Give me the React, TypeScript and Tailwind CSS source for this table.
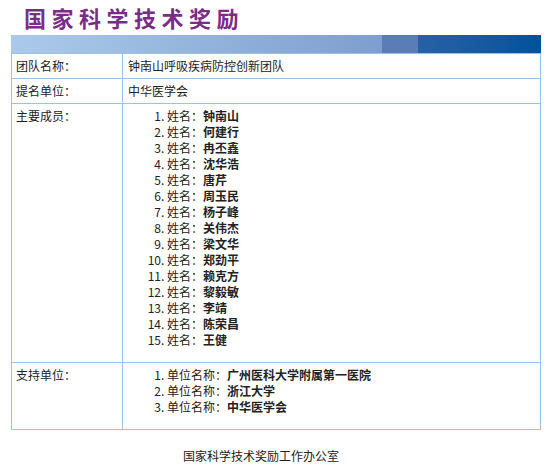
const members = [
  "钟南山",
  "何建行",
  "冉丕鑫",
  "沈华浩",
  "唐芹",
  "周玉民",
  "杨子峰",
  "关伟杰",
  "梁文华",
  "郑劲平",
  "赖克方",
  "黎毅敏",
  "李靖",
  "陈荣昌",
  "王健",
];

const units = ["广州医科大学附属第一医院", "浙江大学", "中华医学会"];

const cjk = "font-['Microsoft_YaHei','Noto_Sans_CJK_SC',sans-serif]";

export default function App() {
  return (
    <div className={`w-[552px] h-[476px] bg-white text-[12px] text-[#222] ${cjk}`}>
      {/* 标题 */}
      <div className="h-[35px] pl-[24px] pt-[3px]">
        <span className="text-[22px] leading-[28px] font-bold tracking-[5.5px] text-[#7b2c87]">国家科学技术奖励</span>
      </div>

      {/* 蓝色横条 */}
      <div className="ml-[11px] w-[530px] h-[18px] flex">
        <div className="w-[371px] bg-gradient-to-r from-[#abcaea] to-[#7e9ecf]" />
        <div className="w-[36px] bg-[#5a7db7]" />
        <div className="flex-1 bg-gradient-to-r from-[#2662a5] to-[#00529b]" />
      </div>

      <table className="ml-[11px] w-[530px] border-collapse border border-[#9dc0e6]">
        <tbody>
          <tr className="h-[25px]">
            <td className="w-[111px] border border-[#9dc0e6] pl-[4px] align-middle">团队名称：</td>
            <td className="border border-[#9dc0e6] pl-[5px] align-middle">钟南山呼吸疾病防控创新团队</td>
          </tr>
          <tr className="h-[25px]">
            <td className="border border-[#9dc0e6] pl-[4px] align-middle">提名单位：</td>
            <td className="border border-[#9dc0e6] pl-[5px] align-middle">中华医学会</td>
          </tr>
          <tr>
            <td className="border border-[#9dc0e6] pl-[4px] align-top pt-[3px]">主要成员：</td>
            <td className="border border-[#9dc0e6] align-top pl-[5px] pt-[4px] pb-[14px] h-[259px]">
              <ol className="list-decimal pl-[39px] leading-[16px]">
                {members.map((m) => (
                  <li key={m}>
                    姓名：<span className="font-bold">{m}</span>
                  </li>
                ))}
              </ol>
            </td>
          </tr>
          <tr>
            <td className="border border-[#9dc0e6] pl-[4px] align-top pt-[3px]">支持单位：</td>
            <td className="border border-[#9dc0e6] align-top pl-[5px] pt-[4px] h-[67px]">
              <ol className="list-decimal pl-[39px] leading-[16px]">
                {units.map((u) => (
                  <li key={u}>
                    单位名称：<span className="font-bold">{u}</span>
                  </li>
                ))}
              </ol>
            </td>
          </tr>
        </tbody>
      </table>

      <div className="mt-[18px] w-[522px] text-center leading-[16px]">国家科学技术奖励工作办公室</div>
    </div>
  );
}
